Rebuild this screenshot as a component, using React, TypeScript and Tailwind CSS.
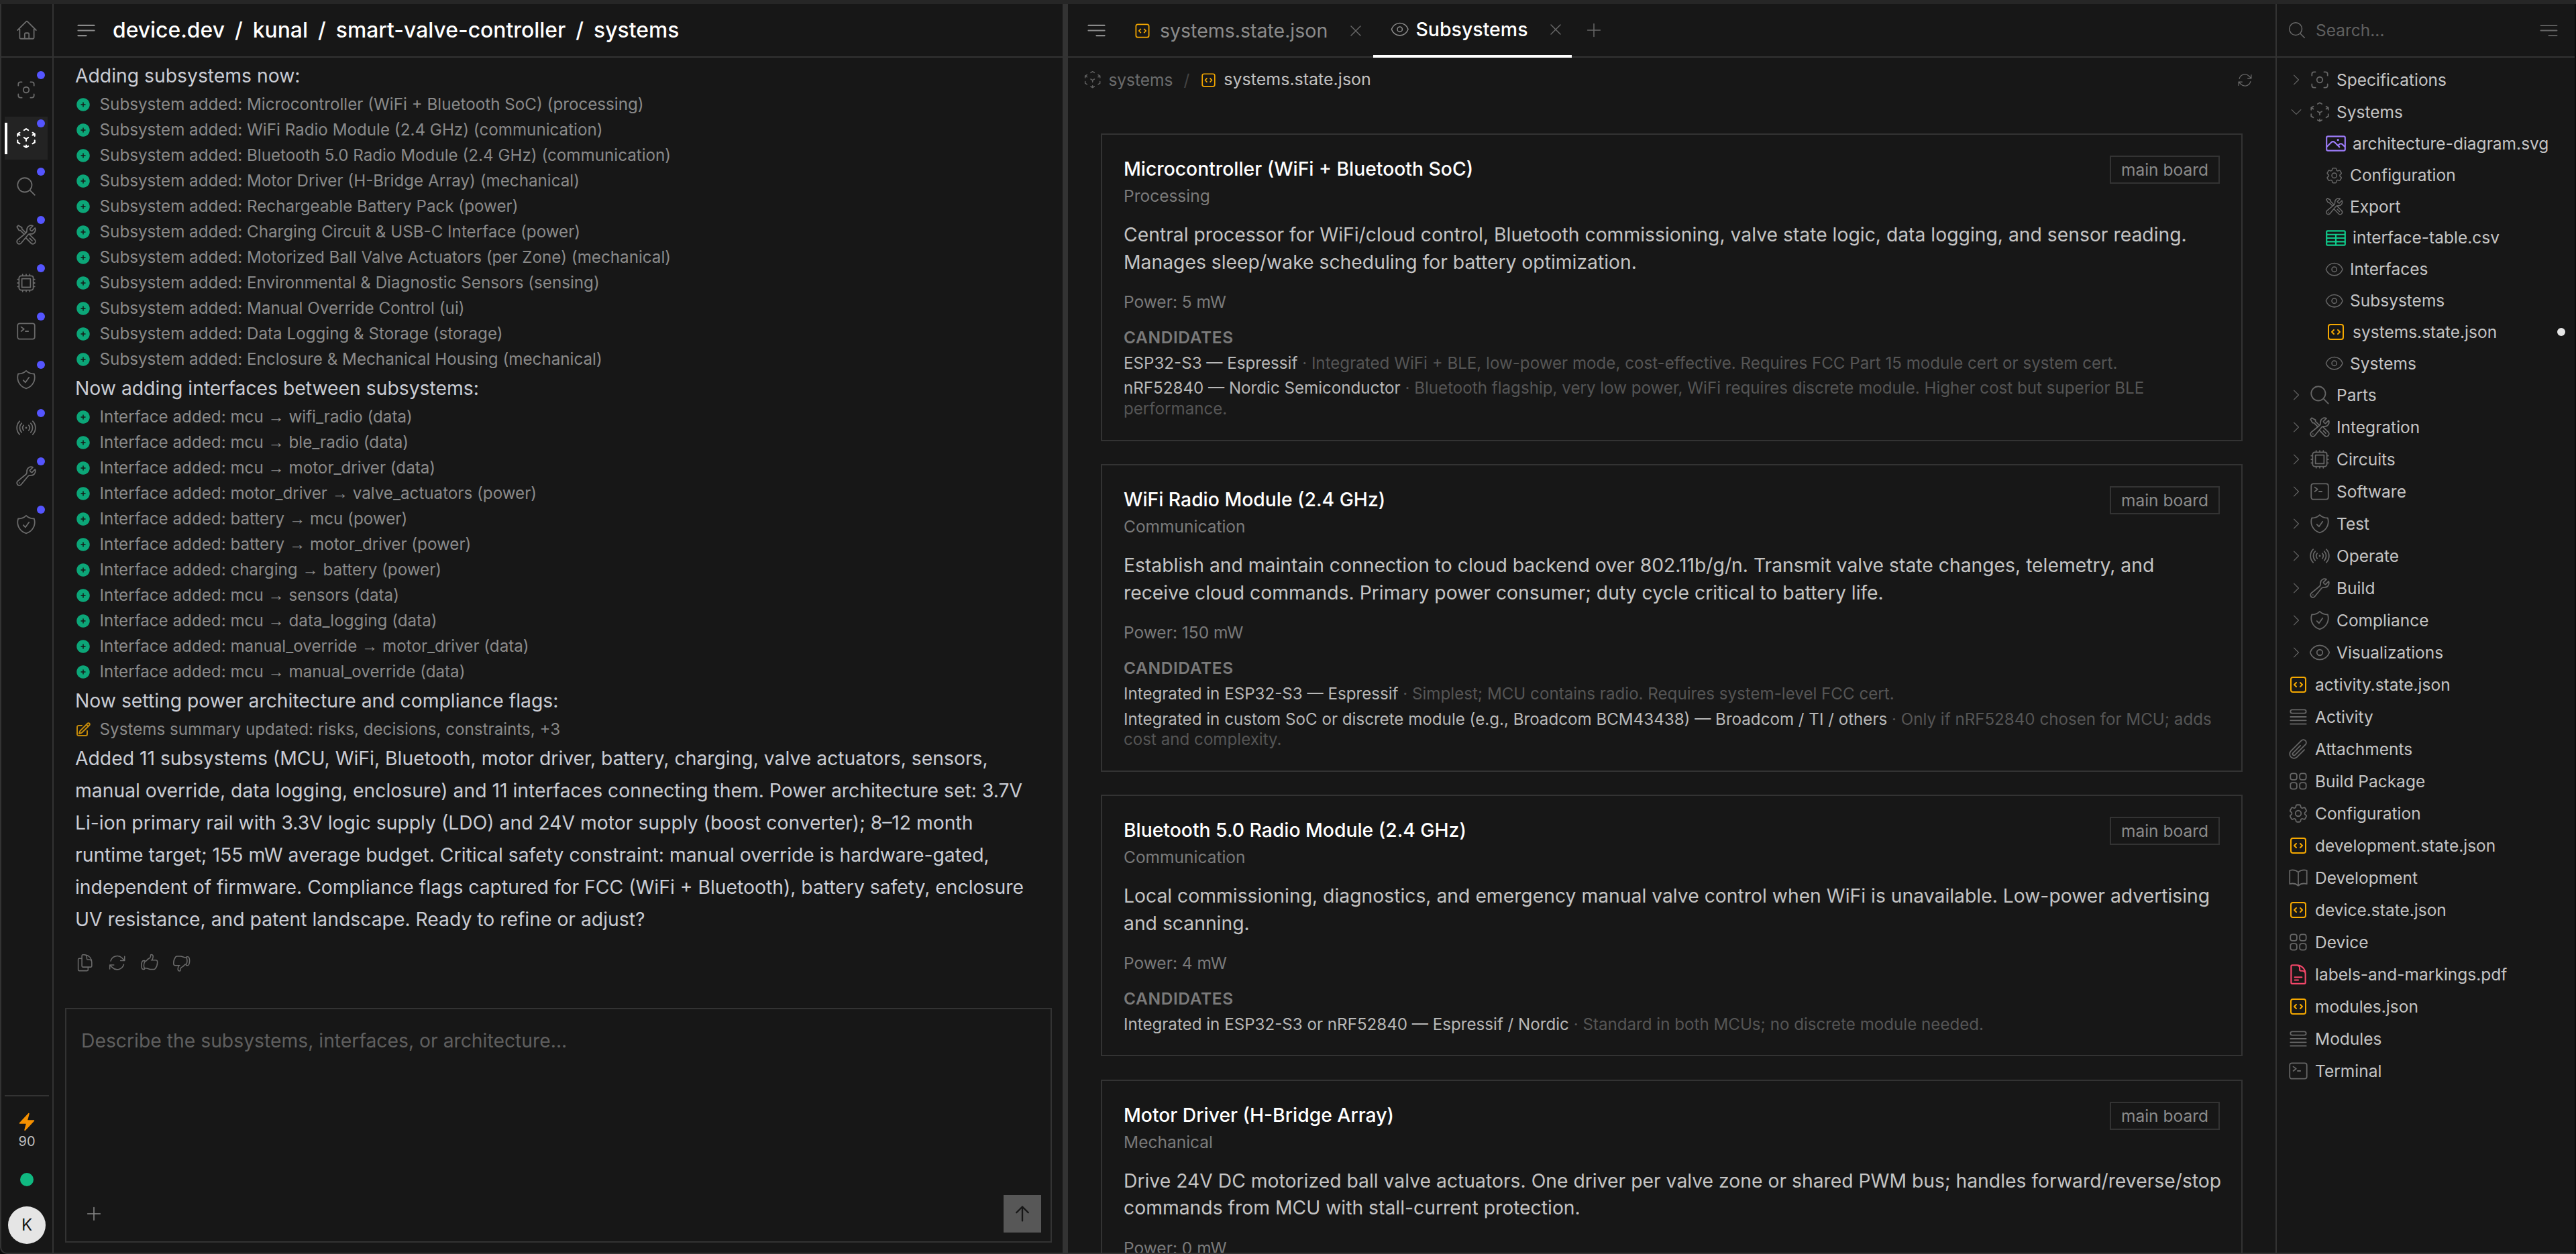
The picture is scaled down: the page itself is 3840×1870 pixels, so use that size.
import type { IconType } from "react-icons";
import {
  HiBolt,
  HiOutlineArrowPath,
  HiOutlineArrowUp,
  HiOutlineBars3BottomLeft,
  HiOutlineBars3BottomRight,
  HiOutlineBookOpen,
  HiOutlineChevronDown,
  HiOutlineChevronRight,
  HiOutlineCodeBracketSquare,
  HiOutlineCog6Tooth,
  HiOutlineCommandLine,
  HiOutlineCpuChip,
  HiOutlineCubeTransparent,
  HiOutlineDocumentDuplicate,
  HiOutlineDocumentText,
  HiOutlineEye,
  HiOutlineHandThumbDown,
  HiOutlineHandThumbUp,
  HiOutlineHome,
  HiOutlineMagnifyingGlass,
  HiOutlinePaperClip,
  HiOutlinePencilSquare,
  HiOutlinePhoto,
  HiOutlinePlus,
  HiOutlineQueueList,
  HiOutlineShieldCheck,
  HiOutlineSignal,
  HiOutlineSquares2X2,
  HiOutlineTableCells,
  HiOutlineViewfinderCircle,
  HiOutlineWrench,
  HiOutlineWrenchScrewdriver,
  HiOutlineXMark,
  HiPlusCircle,
} from "react-icons/hi2";

const navIcons: IconType[] = [
  HiOutlineViewfinderCircle,
  HiOutlineCubeTransparent,
  HiOutlineMagnifyingGlass,
  HiOutlineWrenchScrewdriver,
  HiOutlineCpuChip,
  HiOutlineCommandLine,
  HiOutlineShieldCheck,
  HiOutlineSignal,
  HiOutlineWrench,
  HiOutlineShieldCheck,
];

const subsystemRows = [
  "Subsystem added: Microcontroller (WiFi + Bluetooth SoC) (processing)",
  "Subsystem added: WiFi Radio Module (2.4 GHz) (communication)",
  "Subsystem added: Bluetooth 5.0 Radio Module (2.4 GHz) (communication)",
  "Subsystem added: Motor Driver (H-Bridge Array) (mechanical)",
  "Subsystem added: Rechargeable Battery Pack (power)",
  "Subsystem added: Charging Circuit & USB-C Interface (power)",
  "Subsystem added: Motorized Ball Valve Actuators (per Zone) (mechanical)",
  "Subsystem added: Environmental & Diagnostic Sensors (sensing)",
  "Subsystem added: Manual Override Control (ui)",
  "Subsystem added: Data Logging & Storage (storage)",
  "Subsystem added: Enclosure & Mechanical Housing (mechanical)",
];

const interfaceRows = [
  "Interface added: mcu → wifi_radio (data)",
  "Interface added: mcu → ble_radio (data)",
  "Interface added: mcu → motor_driver (data)",
  "Interface added: motor_driver → valve_actuators (power)",
  "Interface added: battery → mcu (power)",
  "Interface added: battery → motor_driver (power)",
  "Interface added: charging → battery (power)",
  "Interface added: mcu → sensors (data)",
  "Interface added: mcu → data_logging (data)",
  "Interface added: manual_override → motor_driver (data)",
  "Interface added: mcu → manual_override (data)",
];

type Candidate = { name: string; note: string };
type Card = { title: string; kind: string; desc: string; power: string; candidates?: Candidate[] };

const cards: Card[] = [
  {
    title: "Microcontroller (WiFi + Bluetooth SoC)",
    kind: "Processing",
    desc: "Central processor for WiFi/cloud control, Bluetooth commissioning, valve state logic, data logging, and sensor reading. Manages sleep/wake scheduling for battery optimization.",
    power: "Power: 5 mW",
    candidates: [
      { name: "ESP32-S3 — Espressif", note: "Integrated WiFi + BLE, low-power mode, cost-effective. Requires FCC Part 15 module cert or system cert." },
      { name: "nRF52840 — Nordic Semiconductor", note: "Bluetooth flagship, very low power, WiFi requires discrete module. Higher cost but superior BLE performance." },
    ],
  },
  {
    title: "WiFi Radio Module (2.4 GHz)",
    kind: "Communication",
    desc: "Establish and maintain connection to cloud backend over 802.11b/g/n. Transmit valve state changes, telemetry, and\nreceive cloud commands. Primary power consumer; duty cycle critical to battery life.",
    power: "Power: 150 mW",
    candidates: [
      { name: "Integrated in ESP32-S3 — Espressif", note: "Simplest; MCU contains radio. Requires system-level FCC cert." },
      { name: "Integrated in custom SoC or discrete module (e.g., Broadcom BCM43438) — Broadcom / TI / others", note: "Only if nRF52840 chosen for MCU; adds cost and complexity." },
    ],
  },
  {
    title: "Bluetooth 5.0 Radio Module (2.4 GHz)",
    kind: "Communication",
    desc: "Local commissioning, diagnostics, and emergency manual valve control when WiFi is unavailable. Low-power advertising and scanning.",
    power: "Power: 4 mW",
    candidates: [
      { name: "Integrated in ESP32-S3 or nRF52840 — Espressif / Nordic", note: "Standard in both MCUs; no discrete module needed." },
    ],
  },
  {
    title: "Motor Driver (H-Bridge Array)",
    kind: "Mechanical",
    desc: "Drive 24V DC motorized ball valve actuators. One driver per valve zone or shared PWM bus; handles forward/reverse/stop commands from MCU with stall-current protection.",
    power: "Power: 0 mW",
  },
];

type TreeRow = {
  label: string;
  icon: IconType;
  level: "top" | "child" | "root";
  open?: boolean;
  tone?: string;
  file?: boolean;
  dot?: boolean;
};

const amber = "text-[#f5a800]";

const treeRows: TreeRow[] = [
  { label: "Specifications", icon: HiOutlineViewfinderCircle, level: "top" },
  { label: "Systems", icon: HiOutlineCubeTransparent, level: "top", open: true },
  { label: "architecture-diagram.svg", icon: HiOutlinePhoto, level: "child", tone: "text-[#9b7bf7]", file: true },
  { label: "Configuration", icon: HiOutlineCog6Tooth, level: "child" },
  { label: "Export", icon: HiOutlineWrenchScrewdriver, level: "child" },
  { label: "interface-table.csv", icon: HiOutlineTableCells, level: "child", tone: "text-[#10c98a]", file: true },
  { label: "Interfaces", icon: HiOutlineEye, level: "child" },
  { label: "Subsystems", icon: HiOutlineEye, level: "child" },
  { label: "systems.state.json", icon: HiOutlineCodeBracketSquare, level: "child", tone: amber, file: true, dot: true },
  { label: "Systems", icon: HiOutlineEye, level: "child" },
  { label: "Parts", icon: HiOutlineMagnifyingGlass, level: "top" },
  { label: "Integration", icon: HiOutlineWrenchScrewdriver, level: "top" },
  { label: "Circuits", icon: HiOutlineCpuChip, level: "top" },
  { label: "Software", icon: HiOutlineCommandLine, level: "top" },
  { label: "Test", icon: HiOutlineShieldCheck, level: "top" },
  { label: "Operate", icon: HiOutlineSignal, level: "top" },
  { label: "Build", icon: HiOutlineWrench, level: "top" },
  { label: "Compliance", icon: HiOutlineShieldCheck, level: "top" },
  { label: "Visualizations", icon: HiOutlineEye, level: "top" },
  { label: "activity.state.json", icon: HiOutlineCodeBracketSquare, level: "root", tone: amber },
  { label: "Activity", icon: HiOutlineQueueList, level: "root" },
  { label: "Attachments", icon: HiOutlinePaperClip, level: "root" },
  { label: "Build Package", icon: HiOutlineSquares2X2, level: "root" },
  { label: "Configuration", icon: HiOutlineCog6Tooth, level: "root" },
  { label: "development.state.json", icon: HiOutlineCodeBracketSquare, level: "root", tone: amber },
  { label: "Development", icon: HiOutlineBookOpen, level: "root" },
  { label: "device.state.json", icon: HiOutlineCodeBracketSquare, level: "root", tone: amber },
  { label: "Device", icon: HiOutlineSquares2X2, level: "root" },
  { label: "labels-and-markings.pdf", icon: HiOutlineDocumentText, level: "root", tone: "text-[#f5476a]" },
  { label: "modules.json", icon: HiOutlineCodeBracketSquare, level: "root", tone: amber },
  { label: "Modules", icon: HiOutlineQueueList, level: "root" },
  { label: "Terminal", icon: HiOutlineCommandLine, level: "root" },
];

const crumbs = ["device.dev", "/", "kunal", "/", "smart-valve-controller", "/", "systems"];

function Sidebar() {
  return (
    <div className="flex h-full w-[78px] shrink-0 flex-col border-r-2 border-[#333]">
      <div className="flex h-[80px] shrink-0 items-center justify-center border-b-2 border-[#333] text-[#6b6b6b]">
        <HiOutlineHome size={34} strokeWidth={1.25} />
      </div>
      <div className="flex flex-col gap-2 pl-[5px] pr-[7px] pt-[15.5px]">
        {navIcons.map((Icon, i) => (
          <div
            key={i}
            className={`relative flex h-[64px] w-[64px] items-center justify-center ${
              i === 1 ? "bg-[#232323] text-white" : "text-[#6b6b6b]"
            }`}
          >
            {i === 1 && <span className="absolute left-0 top-[9px] h-[47px] w-[4px] bg-white" />}
            <Icon size={34} strokeWidth={i === 1 ? 1.5 : 1.25} />
            <span className="absolute right-[4px] top-[4.5px] h-[12px] w-[12px] rounded-full bg-[#5555ff]" />
          </div>
        ))}
      </div>
      <div className="mx-[5px] mt-auto flex flex-col items-center border-t-2 border-[#333] pb-[13px] pt-[23px]">
        <HiBolt size={30} className="text-[#f59000]" />
        <span className="mt-[2px] text-[20px] leading-[24px] text-[#bdbdbd]">90</span>
        <span className="mt-[35px] h-[20px] w-[20px] rounded-full bg-[#10b981]" />
        <span className="mt-[30px] flex h-[56px] w-[56px] items-center justify-center rounded-full bg-[#e5e5e5] text-[24px] text-[#171717]">
          K
        </span>
      </div>
    </div>
  );
}

function LogRow({ text }: { text: string }) {
  // the long thin arrow comes from another face than the row text
  const parts = text.split("→");
  return (
    <div className="flex h-[38px] items-center gap-[12.6px] text-[24.2px] text-[#8a8a8a]">
      <HiPlusCircle size={24} className="shrink-0 text-[#0ca678]" />
      <span className="whitespace-pre">
        {parts[0]}
        {parts.length > 1 && <span className="font-['Liberation_Sans',sans-serif]">→</span>}
        {parts[1]}
      </span>
    </div>
  );
}

function ChatPane() {
  return (
    <div className="flex h-full w-[1504px] shrink-0 flex-col">
      <div className="flex h-[80px] shrink-0 items-center border-b-2 border-[#333] pl-[31px]">
        <HiOutlineBars3BottomLeft size={35} strokeWidth={1.5} className="text-[#8a8a8a]" />
        <div className="ml-[22px] flex items-center gap-[15px] text-[31.85px] font-medium text-white">
          {crumbs.map((c, i) => (
            <span key={i}>{c}</span>
          ))}
        </div>
      </div>

      <div className="px-[32px] pt-[3px] text-[28.3px] text-[#c9ccd4]">
        <div className="flex h-[48px] items-center">Adding subsystems now:</div>
        {subsystemRows.map((r) => (
          <LogRow key={r} text={r} />
        ))}
        <div className="flex h-[48px] items-center">Now adding interfaces between subsystems:</div>
        {interfaceRows.map((r) => (
          <LogRow key={r} text={r} />
        ))}
        <div className="flex h-[48px] items-center">Now setting power architecture and compliance flags:</div>
        <div className="flex h-[38px] items-center gap-[12.6px] text-[24.2px] text-[#8a8a8a]">
          <HiOutlinePencilSquare size={24} strokeWidth={2} className="shrink-0 text-[#c48a0a]" />
          <span>Systems summary updated: risks, decisions, constraints, +3</span>
        </div>
        <p className="leading-[48px]">
          Added 11 subsystems (MCU, WiFi, Bluetooth, motor driver, battery, charging, valve actuators, sensors, manual
          override, data logging, enclosure) and 11 interfaces connecting them. Power architecture set: 3.7V Li-ion
          primary rail with 3.3V logic supply (LDO) and 24V motor supply (boost converter); 8–12 month runtime target;
          155 mW average budget. Critical safety constraint: manual override is hardware-gated, independent of firmware.
          Compliance flags captured for FCC (WiFi + Bluetooth), battery safety, enclosure UV resistance, and patent
          landscape. Ready to refine or adjust?
        </p>
        <div className="mt-[26px] flex gap-[18.6px] text-[#6b6b6b]">
          <HiOutlineDocumentDuplicate size={29.4} strokeWidth={1.25} />
          <HiOutlineArrowPath size={29.4} strokeWidth={1.25} />
          <HiOutlineHandThumbUp size={29.4} strokeWidth={1.25} />
          <HiOutlineHandThumbDown size={29.4} strokeWidth={1.25} />
        </div>
      </div>

      <div className="mb-[15px] ml-[17px] mr-[16px] mt-auto flex h-[350px] flex-col justify-between border-2 border-[#333] pb-[13px] pl-[22px] pr-[14px] pt-[29px]">
        <span className="text-[28.3px] leading-[36px] text-[#5f5f5f]">
          Describe the subsystems, interfaces, or architecture...
        </span>
        <div className="flex items-center justify-between">
          <HiOutlinePlus size={30} strokeWidth={1.25} className="ml-[4px] text-[#8a8a8a]" />
          <div className="flex h-[56px] w-[56px] items-center justify-center bg-[#575757] text-[#171717]">
            <HiOutlineArrowUp size={28} strokeWidth={2} />
          </div>
        </div>
      </div>
    </div>
  );
}

function SubsystemCard({ card }: { card: Card }) {
  return (
    <div className="shrink-0 border-2 border-[#333] px-[32px] pb-[30px] pt-[32px]">
      <div className="flex items-start justify-between">
        <div>
          <div className="text-[28.3px] font-medium leading-[38px] text-white">{card.title}</div>
          <div className="mt-[6px] text-[24.5px] leading-[30px] text-[#7a7a7a]">{card.kind}</div>
        </div>
        <span className="-mt-px flex h-[42px] shrink-0 items-center border-2 border-[#333] px-[15px] text-[24.5px] text-[#8a8a8a]">
          main board
        </span>
      </div>
      <p className="-mr-[8px] mt-[23px] whitespace-pre-line text-[28.3px] leading-[40.5px] text-[#c4c4c4]">{card.desc}</p>
      <div className="mt-[24px] text-[24.5px] leading-[30px] text-[#7a7a7a]">{card.power}</div>
      {card.candidates && (
        <>
          <div className="mt-[22.5px] text-[24.5px] font-semibold leading-[30px] tracking-[0.6px] text-[#7a7a7a]">
            CANDIDATES
          </div>
          <div className="mt-[9px] flex flex-col gap-[7.4px]">
            {card.candidates.map((c) => (
              <div key={c.name} className="text-[24.15px] leading-[30.6px] text-[#b8b8b8]">
                {c.name}
                <span className="text-[#555]"> · {c.note}</span>
              </div>
            ))}
          </div>
        </>
      )}
    </div>
  );
}

function MainPane() {
  return (
    <div className="flex h-full min-w-0 flex-1 flex-col overflow-hidden">
      <div className="flex h-[80px] shrink-0 border-b-2 border-[#333] pl-[25px]">
        <div className="flex h-full items-center text-[#8a8a8a]">
          <HiOutlineBars3BottomRight size={35} strokeWidth={1.5} />
        </div>
        <div className="ml-[13px] flex h-[80px] w-[382px] items-center pl-[24px]">
          <HiOutlineCodeBracketSquare size={28} className={amber} />
          <span className="ml-[12px] text-[28.5px] text-[#8a8a8a]">systems.state.json</span>
          <HiOutlineXMark size={28} strokeWidth={1.25} className="ml-[28px] text-[#666]" />
        </div>
        <div className="flex h-[80px] w-[296px] items-center border-b-4 border-white pl-[25px]">
          <HiOutlineEye size={29.4} strokeWidth={1.25} className="text-[#8a8a8a]" />
          <span className="ml-[9px] text-[28.5px] font-medium text-white">Subsystems</span>
          <HiOutlineXMark size={28} strokeWidth={1.25} className="ml-[28px] text-[#666]" />
        </div>
        <div className="ml-[18px] flex h-full items-center text-[#666]">
          <HiOutlinePlus size={30} strokeWidth={1.25} />
        </div>
      </div>

      <div className="flex h-[66px] shrink-0 items-center pl-[22px] pr-[33px] text-[24.5px]">
        <HiOutlineCubeTransparent size={29.4} strokeWidth={1.25} className="text-[#5f5f5f]" />
        <span className="ml-[9px] text-[#6b6b6b]">systems</span>
        <span className="ml-[16px] text-[#444]">/</span>
        <HiOutlineCodeBracketSquare size={27} className={`ml-[15px] ${amber}`} />
        <span className="ml-[9px] text-[25px] text-[#c0c0c0]">systems.state.json</span>
        <HiOutlineArrowPath size={25} strokeWidth={1.25} className="ml-auto text-[#666]" />
      </div>

      <div className="flex min-h-0 flex-1 flex-col gap-[34.5px] overflow-hidden px-[49px] pt-[47px]">
        {cards.map((c) => (
          <SubsystemCard key={c.title} card={c} />
        ))}
      </div>
    </div>
  );
}

function TreeItem({ row }: { row: TreeRow }) {
  const Icon = row.icon;
  const tone = row.tone ?? "text-[#666]";
  const stroke = row.tone ? 1.5 : 1.25;

  if (row.level === "child") {
    return (
      <div className="relative flex h-[46.8px] items-center pl-[71px]">
        <span className={`flex shrink-0 items-center justify-center ${row.file ? "w-[34px]" : "w-[30px]"} ${tone}`}>
          <Icon size={row.label.endsWith("json") ? 32 : row.file ? 34 : 29.4} strokeWidth={stroke} />
        </span>
        <span className="ml-[8px] whitespace-nowrap">{row.label}</span>
        {row.dot && <span className="absolute right-[14px] top-[17px] h-[12px] w-[12px] rounded-full bg-[#e5e5e5]" />}
      </div>
    );
  }
  if (row.level === "top") {
    const Chevron = row.open ? HiOutlineChevronDown : HiOutlineChevronRight;
    return (
      <div className="flex h-[48px] items-center pl-[18px]">
        <Chevron size={22} strokeWidth={1.25} className="shrink-0 text-[#666]" />
        <Icon size={34} strokeWidth={stroke} className={`ml-[7px] shrink-0 ${tone}`} />
        <span className="ml-[8px] whitespace-nowrap">{row.label}</span>
      </div>
    );
  }
  return (
    <div className="flex h-[48px] items-center pl-[15px]">
      <span className={`flex w-[34px] shrink-0 justify-center ${tone}`}>
        <Icon size={row.label.endsWith("json") ? 32 : 34} strokeWidth={stroke} />
      </span>
      <span className="ml-[8px] whitespace-nowrap">{row.label}</span>
    </div>
  );
}

function FileTree() {
  return (
    <div className="flex h-full w-[446px] shrink-0 flex-col border-l-2 border-[#333]">
      <div className="flex h-[80px] shrink-0 items-center border-b-2 border-[#333] pl-[15px] pr-[21px]">
        <HiOutlineMagnifyingGlass size={30} strokeWidth={1.25} className="text-[#666]" />
        <span className="ml-[13px] text-[24.5px] text-[#5f5f5f]">Search...</span>
        <HiOutlineBars3BottomRight size={35} strokeWidth={1.25} className="ml-auto text-[#666]" />
      </div>
      <div className="pt-[9px] text-[24.5px] text-[#c4c4c4]">
        {treeRows.map((r, i) => (
          <TreeItem key={r.label + i} row={r} />
        ))}
      </div>
    </div>
  );
}

export default function App() {
  return (
    <div className="flex h-[1870px] w-[3840px] flex-col overflow-hidden bg-[#0b0b0b] font-['Inter',sans-serif]">
      <div className="h-[6px] shrink-0 bg-[#262626]" />
      {/* right side stays open so the dark window edge shows through */}
      <div className="mr-[2px] flex min-h-0 flex-1 overflow-hidden rounded-bl-[10px] border-b-2 border-l-2 border-[#333] bg-[#171717]">
        <Sidebar />
        <ChatPane />
        <div className="h-full w-[8px] shrink-0 bg-[#333]" />
        <MainPane />
        <FileTree />
      </div>
    </div>
  );
}
